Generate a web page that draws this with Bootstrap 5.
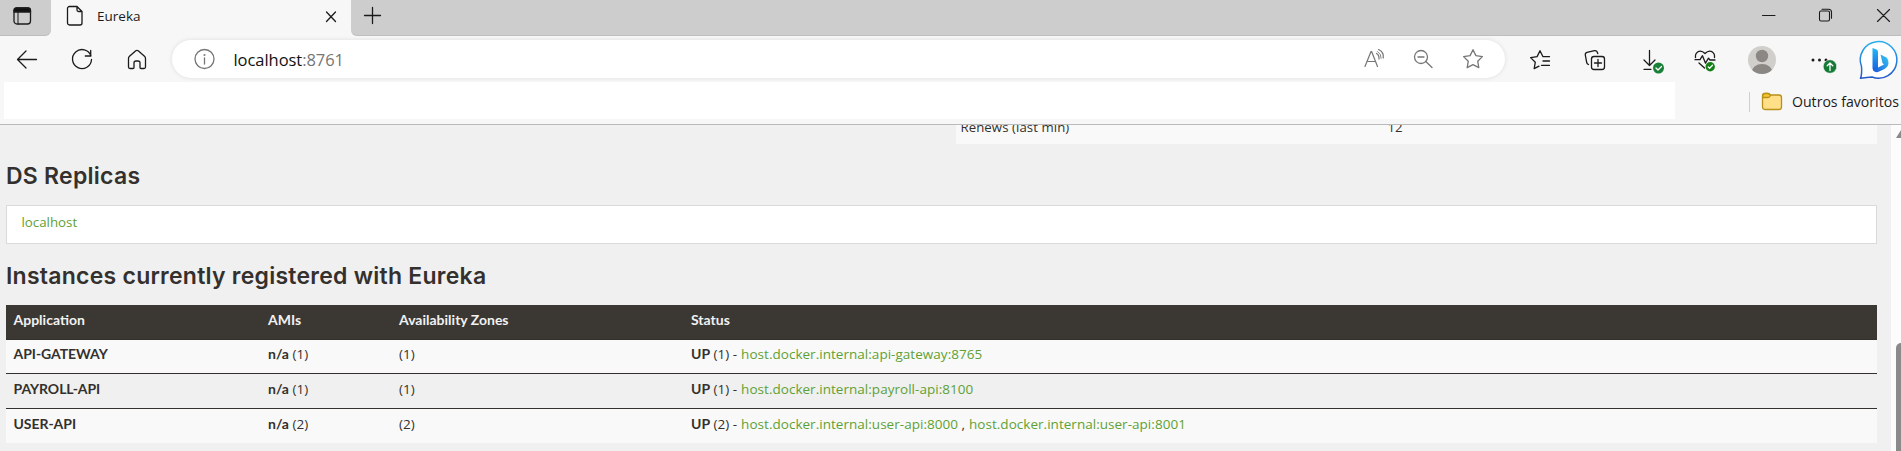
<!DOCTYPE html>
<html lang="pt-BR">
<head>
<meta charset="utf-8">
<title>Eureka</title>
<link href="https://cdn.jsdelivr.net/npm/bootstrap@5.3.0/dist/css/bootstrap.min.css" rel="stylesheet">
<script src="https://cdn.jsdelivr.net/npm/bootstrap@5.3.0/dist/js/bootstrap.bundle.min.js"></script>
<style>
body{height:451px;overflow:hidden;background:#f0f0f0;font:13.5px/20px "Open Sans","Noto Sans",sans-serif;color:#34302d}
svg{display:block;flex:none;fill:none;stroke:#1b1b1b;stroke-width:1.3;stroke-linecap:round;stroke-linejoin:round}
.tabstrip{height:36px;background:#f7f7f7}
.strip-left{width:51px;background:#cdcdcd;border-radius:0 0 6px 0;border-bottom:1px solid #bebebe;padding:6px 0 0 12px}
.strip-rest{background:#cdcdcd;border-radius:0 0 0 6px;border-bottom:1px solid #bebebe;padding-left:12px}
.tab-active{width:300px;color:#1b1b1b;padding-left:15px}
.tab-title{font-size:13.5px;line-height:32px;margin-left:13px}
.tab-close{margin:10px 14px 0 auto}
.toolbar{height:46px;background:#f7f7f7}
.pill{width:1333px;height:38px;border-radius:19px;background:#fff;box-shadow:0 0 4px #dcdcdc;padding:0 7px 0 8px;margin-left:8px}
.addr{font-size:16.5px;margin:1px 0 0 4.5px;color:#111;letter-spacing:-.05px}
.addr span{color:#767676}
.muted{stroke:#767676}
.favbar{height:43px;background:#f7f7f7;border-bottom:1px solid #bababa;color:#1b1b1b}
.blank{width:1671px;height:37px;background:#fff;margin-left:4px}
.vline{width:1px;height:20px;background:#cfcfcf;margin:10px 11px 0 74px}
.favlabel{font-size:14.1px;line-height:37px;margin:1px 0 0 9px}
.page{height:326px}
.main{width:1871px;margin-left:6px}
.renew{height:19px;width:921px;background:#f9f9f9;overflow:hidden;font-size:13.2px}
.renew>div{margin-top:-8px;padding-left:4.500px}
.renew .lbl{width:427px;letter-spacing:.08px}
h1{font:600 23px/28px Inter,sans-serif;color:#34302d;letter-spacing:.25px}
.h-ds{margin:18px 0 15px}
.h-inst{margin:18px 0 15px}
a{color:#5fa134;text-decoration:none}
.replica{height:39px;background:#fff;border:1px solid #dadada;padding:6px 14.500px;font-size:13.300px}
.apps{table-layout:fixed;width:1871px;border-collapse:separate;border-spacing:0}
.apps th,.apps td{padding:4px 8px 0;height:35px;line-height:20px;vertical-align:top;border:0 solid #34302d;border-bottom-width:1px}
.apps th,.apps b{font-family:Lato,sans-serif;font-weight:700;font-size:14px}
.apps td b{line-height:1}
.apps td a{margin-left:.5px;letter-spacing:.03px}
.apps thead{background:#3b3733;color:#f1f1f1}
.apps th{padding-top:5px}
.apps th:first-child,.apps td:first-child{padding-left:7.500px}
.apps td:first-child b{letter-spacing:-.05px}
.apps tbody tr:nth-child(odd){background:#f9f9f9}
.apps tbody tr:first-child td{height:34px}
.apps tbody tr+tr td{padding-top:5px}
.apps tbody tr:last-child td{border:0;height:34px}
.c-app{width:254px}.c-ami{width:131px}.c-zone{width:292px}
.scroll{width:10px;background:#fcfcfc;padding:5px 0 0 5px}
.thumb{width:5px;height:120px;margin-top:205px;background:#8a8a8a;border-radius:5px 0 0 0}
</style>
</head>
<body>
<header>
<div class="tabstrip d-flex">
  <div class="strip-left"><svg width="20" height="20"><rect x="2" y="2" width="16.5" height="16" rx="3"/><path d="M2 6V4.500a2.500 2.500 0 0 1 2.500-2.500h11.500a2.500 2.500 0 0 1 2.500 2.500V6z" fill="#111"/><path d="M6 6v12" stroke-width="1"/></svg></div>
  <div class="tab-active d-flex">
    <svg width="18" height="28"><path d="M3.500 6.500h7.500l5 5v11.500a2 2 0 0 1-2 2H3.500a2 2 0 0 1-2-2v-14.500a2 2 0 0 1 2-2zM11 6.500v3.500a1.500 1.500 0 0 0 1.500 1.500H16"/></svg>
    <div class="tab-title">Eureka</div>
    <svg class="tab-close" width="12" height="14"><path d="M1.500 2l9 9.500M10.500 2l-9 9.500"/></svg>
  </div>
  <div class="strip-rest d-flex flex-grow-1">
    <svg width="20" height="28"><path d="M1.500 15.500h16M9.500 7.500v16"/></svg>
    <svg class="ms-auto" width="160" height="34"><path d="M21.500 15.500h12.500M78.500 12.500a1.500 1.500 0 0 1 1.500-1.500h7a1.500 1.500 0 0 1 1.500 1.500v7a1.500 1.500 0 0 1-1.500 1.500h-7a1.500 1.500 0 0 1-1.500-1.500zM81 9.300h6.500a3 3 0 0 1 3 3v6M136.500 9.500l12 12M148.500 9.500l-12 12" stroke-width="1.1"/></svg>
  </div>
</div>
<div class="toolbar d-flex">
  <svg width="54" height="46" viewBox="-27 -24 54 46"><path d="M9.500-.5h-19M-1-9l-8.500 8.500L-1 8"/></svg>
  <svg width="56" height="46" viewBox="-28 -24 56 46"><path d="M9-4A9.500 9.500 0 1 0 9.500-.5M8.700-9.500v5.500H3.300"/></svg>
  <svg width="54" height="46" viewBox="-27 -24 54 46"><path d="M-8.500-1.500q0-1.300 1-2.200L-1.200-9.200q1.200-.9 2.400 0l6.300 5.500q1 .9 1 2.200V7q0 1.500-1.500 1.500H4Q3 8.500 3 7.500V3Q3 1 1 1h-2q-2 0-2 2v4.500q0 1-1 1h-3Q-8.500 8.500-8.500 7z"/></svg>
  <div class="pill d-flex align-items-center align-self-center">
    <svg class="muted" width="49" height="38" viewBox="-24.500 -19 49 38"><circle r="9.500"/><path d="M0-1v6" /><circle cy="-4" r=".4"/></svg>
    <div class="addr">localhost<span>:8761</span></div>
    <svg class="muted ms-auto" width="50" height="38" viewBox="-25 -19 50 38"><path d="M-9 7.500L-3-7.500h.6L3.500 7.500M-7 2.500h8.500M2.500-5.500q2.800 1.500 2.500 5.500M4.500-9.500Q10-7 9.300-1" stroke-width="1.200"/><path d="M3.500-7.500Q7.500-5 7.200-.7" stroke-width=".9"/></svg>
    <svg class="muted" width="49" height="38" viewBox="-24.500 -19 49 38"><circle cx="-2.500" cy="-2" r="6.500"/><path d="M2.300 2.500L8.500 8.500M-5.500-2h6"/></svg>
    <svg class="muted" width="50" height="38" viewBox="-25 -19 50 38"><path d="M0-9.300l2.900 5.900 6.500 1-4.700 4.600L5.800 8.700 0 5.700-5.800 8.700l1.100-6.500L-9.400-2.400l6.500-1z"/></svg>
  </div>
  <svg class="ms-2" width="54" height="46" viewBox="-27 -24 54 46"><path d="M9.500-3.300H3L0-9.300l-2.900 5.900-6.500 1 4.700 4.600L-5.800 8.700-1 6.200M3 1h6.500M1.500 5.300h8"/></svg>
  <svg width="56" height="46" viewBox="-28 -24 56 46"><rect x="-3.500" y="-3.500" width="13" height="13" rx="2.500"/><path d="M3-.5v7M-.5 3h7M-6.500 4.500Q-8 4-8.300 2.500L-9.700-5q-.3-2 1.700-2.600l7.500-1.800Q2-9.700 2.800-6.500"/></svg>
  <svg width="57" height="46" viewBox="-30 -24 57 46"><path d="M-3.500-9.500V5.500M-9 0l5.500 5.500L2 0M-9 9.300h7"/><circle cx="5.500" cy="8" r="5.500" fill="#1a8038" stroke="none"/><path d="M3 8l2 2 3.500-3.500" stroke="#fff"/></svg>
  <svg width="52" height="46" viewBox="-25 -24 52 46"><path d="M-9.500-2.500Q-10-6.500-7-8.300-3.500-10 0-6.500 3.500-10 7-8.300 10-6.500 9.500-2.500M-10-.3h5l2.500-4 3 7.500 3-5 1.500 1.800H10M-6 3L-.5 8"/><circle cx="5.200" cy="6.700" r="4.700" fill="#168016" stroke="none"/><path d="M3.200 6.900l1.400 1.400 2.900-3" stroke="#fff"/></svg>
  <svg width="60" height="46" viewBox="-30 -24 60 46"><defs><clipPath id="av"><circle r="14"/></clipPath></defs><g stroke="none"><circle r="14" fill="#d1cfcb"/><circle cy="-4" r="6.200" fill="#8b8784"/><ellipse cy="12.500" rx="10.500" ry="8.500" fill="#8b8784" clip-path="url(#av)"/></g></svg>
  <svg width="60" height="46" viewBox="-30 -24 60 46"><g stroke="none" fill="#1b1b1b"><circle cx="-9" r="1.500"/><circle cx="-2.500" r="1.500"/><circle cx="4" r="1.500"/></g><circle cx="8" cy="6.500" r="6.800" fill="#157a35" stroke="#f7f7f7" stroke-width=".6"/><path d="M8 10.500V3.200M5.200 5.700L8 3l2.800 2.700" stroke="#fff"/></svg>
  <svg class="ms-1" width="45" height="46" viewBox="-23 -24 45 46"><defs><linearGradient id="ring" x1="0" y1="0" x2="0" y2="1"><stop offset="0" stop-color="#2ab0ee"/><stop offset="1" stop-color="#2458c8"/></linearGradient><linearGradient id="stem" x1="0" y1="0" x2="0" y2="1"><stop offset="0" stop-color="#22b8f5"/><stop offset="1" stop-color="#1a5fe0"/></linearGradient><linearGradient id="bowl" x1="1" y1="0" x2="0" y2="1"><stop offset="0" stop-color="#35cdf5"/><stop offset="1" stop-color="#1c55d8"/></linearGradient></defs><path d="M-18.500 18.300Q-16.800 14-17.500 6.500A18.300 18.300 0 1 1-7 17Q-12 17.500-18.500 18.300z" fill="#fff" stroke="url(#ring)" stroke-width="1.500"/><path d="M1.500-5.500q0 0 6 3Q9.800-.5 9.500 3.500 9 7 5 9.300L-1 12q-5 1-5.500-4.500l4.500.5L5 4.500 3.500 3z" fill="url(#bowl)" stroke="none"/><path d="M-6.500-12l4 1.500q1.500.7 1.500 2.200V8.500L-4.500 11q-2-1-2-4z" fill="url(#stem)" stroke="none"/></svg>
</div>
<div class="favbar d-flex">
  <div class="blank"></div><div class="vline"></div>
  <svg class="mt-2" width="22" height="24"><path d="M1.500 6q0-2.500 2.500-2.500h3q1.500 0 2.500 1.500H18q2.500 0 2.500 2.500V17q0 2.500-2.500 2.500H4Q1.500 19.500 1.500 17z" fill="#ffdf87" stroke="#b8901c"/><path d="M1.800 7.500H7q1.500 0 2.500-2Q8.500 3.500 7 3.500H4Q1.500 3.500 1.800 7.500z" fill="#f5c72c" stroke="#b8901c"/></svg>
  <div class="favlabel text-nowrap">Outros favoritos</div>
</div>
</header>
<div class="page d-flex justify-content-between overflow-hidden">
  <main class="main">
    <div class="renew ms-auto"><div class="d-flex"><div class="lbl">Renews (last min)</div><div>12</div></div></div>
    <h1 class="h-ds">DS Replicas</h1>
    <div class="replica"><a href="#">localhost</a></div>
    <h1 class="h-inst">Instances currently registered with Eureka</h1>
    <table class="apps">
      <thead><tr><th class="c-app">Application</th><th class="c-ami">AMIs</th><th class="c-zone">Availability Zones</th><th>Status</th></tr></thead>
      <tbody>
        <tr><td><b>API-GATEWAY</b></td><td><b>n/a</b> (1)</td><td>(1)</td><td><b>UP</b> (1) - <a href="#">host.docker.internal:api-gateway:8765</a></td></tr>
        <tr><td><b>PAYROLL-API</b></td><td><b>n/a</b> (1)</td><td>(1)</td><td><b>UP</b> (1) - <a href="#">host.docker.internal:payroll-api:8100</a></td></tr>
        <tr><td><b>USER-API</b></td><td><b>n/a</b> (2)</td><td>(2)</td><td><b>UP</b> (2) - <a href="#">host.docker.internal:user-api:8000</a> , <a href="#">host.docker.internal:user-api:8001</a></td></tr>
      </tbody>
    </table>
  </main>
  <div class="scroll"><svg width="5" height="8"><path d="M0 8L5 0v8z" fill="#8a8a8a" stroke="none"/></svg><div class="thumb"></div></div>
</div>
</body>
</html>
